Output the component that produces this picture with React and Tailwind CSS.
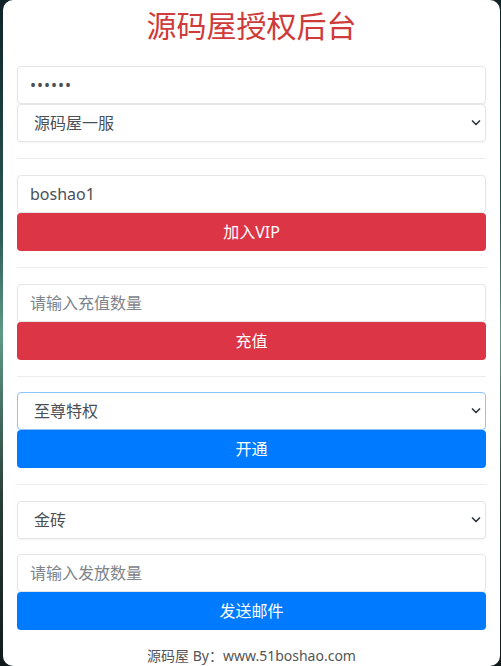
import React from "react";

const font = { fontFamily: '"Noto Sans", "Noto Sans CJK SC", sans-serif' };

function Chevron() {
  return (
    <svg
      className="pointer-events-none absolute right-[5px] top-1/2 -translate-y-1/2"
      width="10"
      height="7"
      viewBox="0 0 10 7"
      fill="none"
    >
      <path d="M1.5 1.5 L5 5 L8.5 1.5" stroke="#343a40" strokeWidth="1.7" strokeLinecap="round" strokeLinejoin="round" />
    </svg>
  );
}

function Select({ value, focused }) {
  return (
    <div className="relative">
      <select
        defaultValue={value}
        className={
          "block h-[38px] w-full appearance-none rounded-[4px] border bg-white pl-[16px] pr-8 text-[16px] text-[#495057] outline-none shadow-[0_1px_2px_rgba(0,0,0,0.05)] " +
          (focused ? "border-[#8ec3fb]" : "border-[#e4e6e8]")
        }
        style={font}
      >
        <option>{value}</option>
      </select>
      <Chevron />
    </div>
  );
}

function Input({ value, placeholder, type = "text" }) {
  return (
    <input
      type={type}
      defaultValue={value}
      placeholder={placeholder}
      className={
        "block h-[38px] w-full rounded-[4px] border border-[#e4e6e8] bg-white px-[12px] text-[16px] text-[#495057] outline-none shadow-[0_1px_2px_rgba(0,0,0,0.05)] placeholder:text-[#7d848b] " +
        (type === "password" ? "tracking-[1px]" : "")
      }
      style={font}
    />
  );
}

function Button({ children, color }) {
  return (
    <button
      className={
        "block h-[38px] w-full rounded-[4px] text-[16px] text-white " +
        (color === "red" ? "bg-[#dc3545]" : "bg-[#007bff]")
      }
      style={font}
    >
      {children}
    </button>
  );
}

function Hr() {
  return <div className="my-4 h-px bg-[#ececec]" />;
}

export default function App() {
  return (
    <div className="min-h-[666px] bg-[linear-gradient(180deg,#0f2226_0%,#2c5a55_35%,#5f9a86_50%,#2a3d36_75%,#101a1c_100%)] pl-[3px] pr-[1px]">
      <div className="flex h-[666px] flex-col rounded-[10px] bg-white px-[14px]" style={font}>
        <h1 className="mt-[2px] h-[48px] text-center text-[30px] leading-[48px] text-[#cf3a3a]" style={font}>
          源码屋授权后台
        </h1>
        <div className="mt-[16px]">
          <Input type="password" value="123456" />
          <Select value="源码屋一服" />
        </div>
        <Hr />
        <div>
          <Input value="boshao1" />
          <Button color="red">加入VIP</Button>
        </div>
        <Hr />
        <div>
          <Input placeholder="请输入充值数量" />
          <Button color="red">充值</Button>
        </div>
        <Hr />
        <div>
          <Select value="至尊特权" focused />
          <Button color="blue">开通</Button>
        </div>
        <Hr />
        <div>
          <Select value="金砖" />
          <div className="h-[15px]" />
          <Input placeholder="请输入发放数量" />
          <Button color="blue">发送邮件</Button>
        </div>
        <div className="mt-[16px] text-center text-[14px] leading-[20px] text-[#555]" style={font}>
          源码屋 By：www.51boshao.com
        </div>
      </div>
    </div>
  );
}
